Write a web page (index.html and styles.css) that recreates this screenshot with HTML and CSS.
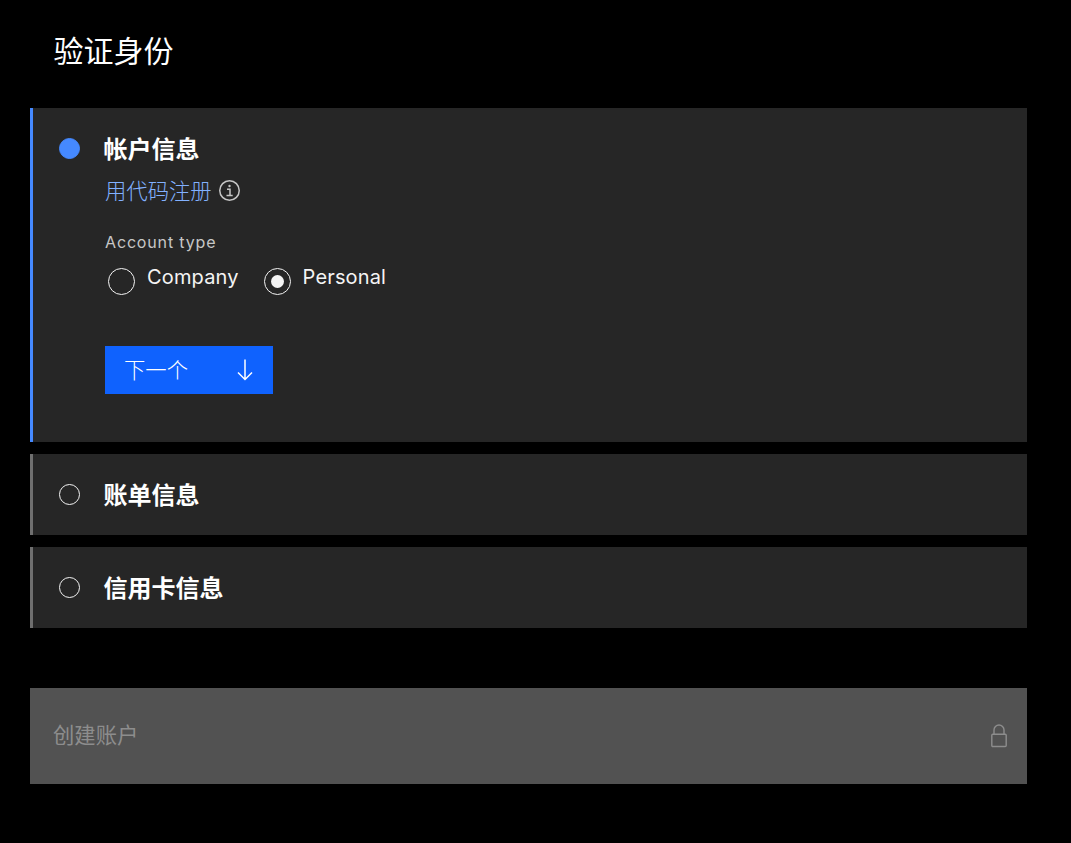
FILE: index.html
```html
<!DOCTYPE html>
<html>
<head>
    <title>验证身份</title>
    <meta http-equiv="content-type" content="text/html; charset=UTF-8"/>
    <link rel="stylesheet" href="styles.css">
</head>
<body>
    <div class="checkout">
        <h1 class="page_title">验证身份</h1>
        <div class="step step_active">
            <div class="step_head">
                <i class="step_dot"></i>
                <h2>帐户信息</h2>
            </div>
            <div class="step_body">
                <div class="code_link">
                    <a href="#">用代码注册</a>
                    <svg class="info_icon" viewBox="0 0 21 21" width="21" height="21" fill="none" stroke="currentColor">
                        <circle cx="10.5" cy="10.5" r="9.75" stroke-width="1.5"/>
                        <path d="M8 9.2h3v6M7.5 15.4h6.2" stroke-width="1.5"/>
                        <circle cx="10.5" cy="6" r="1.2" fill="currentColor" stroke="none"/>
                    </svg>
                </div>
                <p class="field_label">Account type</p>
                <div class="radio_group">
                    <label class="radio_item"><i class="radio_mark"></i><span>Company</span></label>
                    <label class="radio_item"><i class="radio_mark radio_checked"></i><span>Personal</span></label>
                </div>
                <button class="next_btn" type="button">
                    <span>下一个</span>
                    <svg viewBox="0 0 18 22" width="18" height="22" fill="none" stroke="currentColor" stroke-width="1.5">
                        <path d="M9 .5v20M2 13.500l7 7 7-7"/>
                    </svg>
                </button>
            </div>
        </div>
        <div class="step">
            <div class="step_head">
                <i class="step_dot"></i>
                <h2>账单信息</h2>
            </div>
        </div>
        <div class="step">
            <div class="step_head">
                <i class="step_dot"></i>
                <h2>信用卡信息</h2>
            </div>
        </div>
        <button class="submit_btn" type="button" disabled>
            <span>创建账户</span>
            <svg viewBox="0 0 18 24" width="18" height="24" fill="none" stroke="currentColor" stroke-width="1.4">
                <rect x="1.800" y="10.200" width="14.400" height="12.300" rx="1"/>
                <path d="M4 10.200V6a5 5 0 0 1 10 0v4.200"/>
            </svg>
        </button>
    </div>
</body>
</html>
```

FILE: styles.css
```css
html,body{
    margin: 0;
    padding: 0;
    background-color: #000;
}
body{
    font-family: "Inter", "Noto Sans CJK SC", sans-serif;
    color: #f4f4f4;
}
.checkout{
    width: 997px;
    margin-left: 30px;
    padding-top: 29px;
    padding-bottom: 59px;
}
.page_title{
    margin: 0 0 35px 23.5px;
    font-size: 30px;
    line-height: 44px;
    font-weight: 400;
    color: #fff;
}
.step{
    background-color: #262626;
    border-left: 3px solid #6f6f6f;
    margin-bottom: 12px;
    height: 81px;
    box-sizing: border-box;
    padding-top: 24px;
}
.step_active{
    border-left-color: #4589ff;
    height: 334px;
}
.step_head{
    display: flex;
    align-items: center;
    height: 33px;
    padding-left: 26px;
}
.step_head h2{
    margin: 0 0 0 23.5px;
    padding-top: 2px;
    font-size: 24px;
    line-height: 33px;
    font-weight: 700;
    color: #fff;
}
.step_dot{
    width: 21px;
    height: 21px;
    box-sizing: border-box;
    border: 1px solid #f4f4f4;
    border-radius: 50%;
}
.step_active .step_dot{
    background-color: #4589ff;
    border-color: #4589ff;
}
.step_body{
    padding-left: 72px;
}
.code_link{
    display: flex;
    align-items: center;
    margin-top: 7px;
    height: 34px;
}
.code_link a{
    font-size: 21.33px;
    font-weight: 300;
    color: #82b1ff;
    text-decoration: none;
}
.info_icon{
    margin-left: 7px;
    margin-top: 2px;
    color: #c6c6c6;
}
.field_label{
    margin: 24px 0 0;
    font-size: 16px;
    line-height: 24px;
    letter-spacing: 0.85px;
    color: #c6c6c6;
}
.radio_group{
    display: flex;
    margin-top: 10px;
    padding-left: 3px;
    height: 32px;
}
.radio_item{
    display: flex;
    align-items: flex-start;
    margin-right: 25px;
    font-size: 20px;
    line-height: 26px;
    letter-spacing: 0.15px;
    color: #f4f4f4;
}
.radio_mark{
    display: flex;
    align-items: center;
    justify-content: center;
    width: 27px;
    height: 27px;
    box-sizing: border-box;
    margin-top: 4px;
    margin-right: 12px;
    border: 1px solid #f4f4f4;
    border-radius: 50%;
}
.radio_checked::after{
    content: "";
    width: 13px;
    height: 13px;
    border-radius: 50%;
    background-color: #f4f4f4;
}
.next_btn{
    display: flex;
    align-items: center;
    justify-content: space-between;
    width: 168px;
    height: 48px;
    margin-top: 50px;
    padding: 0 19px;
    border: 0;
    background-color: #0f62fe;
    color: #fff;
    font-family: inherit;
    font-size: 21.33px;
    font-weight: 300;
}
.next_btn span{
    margin-bottom: 4px;
}
.submit_btn{
    display: flex;
    align-items: center;
    justify-content: space-between;
    width: 100%;
    height: 96px;
    margin-top: 60px;
    padding: 0 19px 0 23px;
    border: 0;
    background-color: #525252;
    color: #8d8d8d;
    font-family: inherit;
    font-size: 21.33px;
}
.submit_btn span{
    margin-bottom: 6px;
}
```
